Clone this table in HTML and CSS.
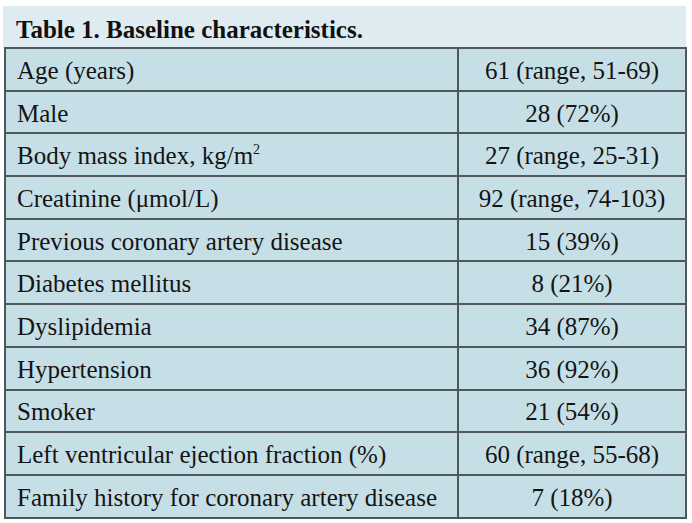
FILE: index.html
```html
<!DOCTYPE html>
<html>
<head>
<meta charset="utf-8">
<link rel="stylesheet" href="styles.css">
</head>
<body>
<div class="wrap">
  <div class="caption">Table 1. Baseline characteristics.</div>
  <table class="data">
    <tr><td class="label">Age (years)</td><td class="value">61 (range, 51-69)</td></tr>
    <tr><td class="label">Male</td><td class="value">28 (72%)</td></tr>
    <tr><td class="label">Body mass index, kg/m<sup>2</sup></td><td class="value">27 (range, 25-31)</td></tr>
    <tr><td class="label">Creatinine (μmol/L)</td><td class="value">92 (range, 74-103)</td></tr>
    <tr><td class="label">Previous coronary artery disease</td><td class="value">15 (39%)</td></tr>
    <tr><td class="label">Diabetes mellitus</td><td class="value">8 (21%)</td></tr>
    <tr><td class="label">Dyslipidemia</td><td class="value">34 (87%)</td></tr>
    <tr><td class="label">Hypertension</td><td class="value">36 (92%)</td></tr>
    <tr><td class="label">Smoker</td><td class="value">21 (54%)</td></tr>
    <tr><td class="label">Left ventricular ejection fraction (%)</td><td class="value">60 (range, 55-68)</td></tr>
    <tr><td class="label">Family history for coronary artery disease</td><td class="value">7 (18%)</td></tr>
  </table>
</div>
</body>
</html>
```
FILE: styles.css
```css
html, body {
  margin: 0;
  padding: 0;
  background: #ffffff;
}
.wrap {
  padding: 6px 6px 0 3px;
  width: 683px;
  font-family: "Liberation Serif", "Times New Roman", serif;
  color: #141414;
}
.caption {
  background: #deecf1;
  height: 41px;
  box-sizing: border-box;
  padding: 10px 0 0 13px;
  font-weight: bold;
  font-size: 25px;
  line-height: 28px;
  color: #111;
}
.data {
  border-collapse: collapse;
  width: 683px;
  margin-left: 1px;
  background: #c6dfe6;
  font-size: 25px;
}
.data td {
  border: 2px solid #50575b;
  height: 37.7px;
  padding: 3px 0 0 0;
  line-height: 28px;
}
.data td.label {
  width: 440px;
  padding-left: 11px;
}
.data td.value {
  text-align: center;
  border-left-color: #222;
}
.data sup {
  font-size: 14px;
  line-height: 0;
  vertical-align: 10px;
}
```
